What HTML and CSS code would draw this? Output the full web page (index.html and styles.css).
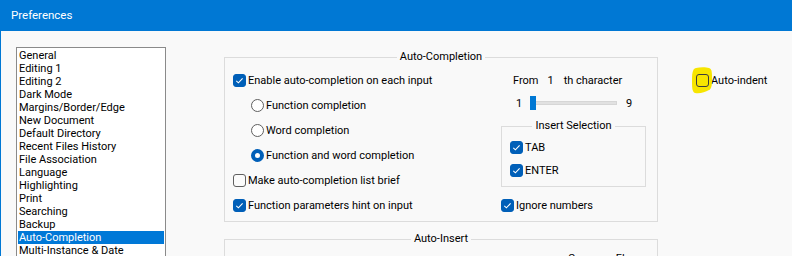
FILE: index.html
```html
<!DOCTYPE html>
<html lang="en">
<head>
    <meta charset="UTF-8">
    <title>Preferences</title>
    <link rel="stylesheet" href="styles.css">
</head>
<body>
    <div class="window">
        <div class="titlebar">Preferences</div>
        <div class="client">
            <ul class="pagelist">
                <li>General</li>
                <li>Editing 1</li>
                <li>Editing 2</li>
                <li>Dark Mode</li>
                <li>Margins/Border/Edge</li>
                <li>New Document</li>
                <li>Default Directory</li>
                <li>Recent Files History</li>
                <li>File Association</li>
                <li>Language</li>
                <li>Highlighting</li>
                <li>Print</li>
                <li>Searching</li>
                <li>Backup</li>
                <li class="selected">Auto-Completion</li>
                <li>Multi-Instance &amp; Date</li>
            </ul>

            <div class="pages">
                <div class="page-col">
                    <fieldset class="group group-main">
                        <legend>Auto-Completion</legend>
                        <div class="group-body">
                            <div class="col-left">
                                <label class="opt"><span class="check on"><svg viewBox="0 0 13 13"><path d="M3.3 6.8 5.4 8.8 9.6 4.4"/></svg></span>Enable auto-completion on each input</label>
                                <label class="opt sub"><span class="radio"></span>Function completion</label>
                                <label class="opt sub"><span class="radio"></span>Word completion</label>
                                <label class="opt sub"><span class="radio on"></span>Function and word completion</label>
                                <label class="opt"><span class="check"></span>Make auto-completion list brief</label>
                                <label class="opt"><span class="check on"><svg viewBox="0 0 13 13"><path d="M3.3 6.8 5.4 8.8 9.6 4.4"/></svg></span>Function parameters hint on input</label>
                            </div>
                            <div class="col-right">
                                <div class="from-row">
                                    <span>From</span>
                                    <span class="from-num">1</span>
                                    <span>th character</span>
                                </div>
                                <div class="slider-row">
                                    <span class="slider-min">1</span>
                                    <span class="track"><span class="thumb"></span></span>
                                    <span class="slider-max">9</span>
                                </div>
                                <fieldset class="group group-sel">
                                    <legend>Insert Selection</legend>
                                    <label class="opt tight"><span class="check on"><svg viewBox="0 0 13 13"><path d="M3.3 6.8 5.4 8.8 9.6 4.4"/></svg></span>TAB</label>
                                    <label class="opt tight"><span class="check on"><svg viewBox="0 0 13 13"><path d="M3.3 6.8 5.4 8.8 9.6 4.4"/></svg></span>ENTER</label>
                                </fieldset>
                                <label class="opt ignore"><span class="check on"><svg viewBox="0 0 13 13"><path d="M3.3 6.8 5.4 8.8 9.6 4.4"/></svg></span>Ignore numbers</label>
                            </div>
                        </div>
                    </fieldset>

                    <fieldset class="group group-insert">
                        <legend>Auto-Insert</legend>
                        <div class="insert-label">Common Flags</div>
                    </fieldset>
                </div>

                <div class="side-col">
                    <label class="opt marked">
                        <svg class="marker" viewBox="0 0 22 27"><path d="M5 1 C9 0 15 0 18 1 C21 2 21 6 21 11 C21 17 21 21 18 23 C14 25 9 27 4 26 C1 25 1 20 1 14 C1 8 1 2 5 1 Z"/></svg>
                        <span class="check"></span>Auto-indent
                    </label>
                </div>
            </div>
        </div>
    </div>
</body>
</html>
```

FILE: styles.css
```css
* {
    margin: 0;
    padding: 0;
    box-sizing: border-box;
}

body {
    background: #f9f9f9;
    font-family: Roboto, "Noto Sans", sans-serif;
    font-size: 11px;
    color: #000;
    height: 256px;
    overflow: hidden;
}

.window {
    border-left: 1px solid #0078d4;
    min-height: 256px;
}

.titlebar {
    height: 31px;
    line-height: 31px;
    padding-left: 10px;
    background: #0078d4;
    color: #fff;
    font-size: 11.5px;
}

.client {
    display: flex;
    padding: 16px 0 0 15px;
}

/* page list on the left */
.pagelist {
    list-style: none;
    flex-shrink: 0;
    width: 150px;
    height: 240px;
    padding: 1px 1px 0;
    border: 1px solid #8a8a8a;
    background: #fff;
    overflow: hidden;
}

.pagelist li {
    height: 13px;
    line-height: 13px;
    padding-left: 1px;
    white-space: nowrap;
}

.pagelist li.selected {
    background: #0078d7;
    color: #fff;
}

.pages {
    display: flex;
    align-items: flex-start;
    margin-left: 58px;
    padding-top: 3px;
}

.page-col {
    width: 434px;
}

/* group boxes */
.group {
    border: 1px solid #dcdcdc;
    min-width: 0;
}

.group legend {
    margin: 0 auto;
    padding: 0 3px;
    line-height: 14px;
}

.group-main {
    padding: 4px 8px 3px;
}

.group-body {
    display: grid;
    grid-template-columns: 268px 1fr;
}

/* checkboxes and radios */
.opt {
    display: flex;
    align-items: center;
    height: 25px;
    white-space: nowrap;
}

.opt.sub {
    padding-left: 18px;
}

.opt.tight {
    height: 23px;
}

.check {
    display: flex;
    flex-shrink: 0;
    width: 13px;
    height: 13px;
    margin-right: 2px;
    border: 1px solid #5f5f5f;
    border-radius: 3px;
    background: rgba(255, 255, 255, 0.3);
}

.check.on {
    border-color: #005fb8;
    background: #005fb8;
}

.check svg {
    width: 13px;
    height: 13px;
    margin: -1px;
    fill: none;
    stroke: #fff;
    stroke-width: 1.1;
}

.radio {
    flex-shrink: 0;
    width: 13px;
    height: 13px;
    margin-right: 2px;
    border: 1px solid #5f5f5f;
    border-radius: 50%;
    background: #fff;
}

.radio.on {
    border: 4px solid #005fb8;
}

/* right column */
.from-row {
    display: flex;
    align-items: center;
    height: 25px;
    padding-left: 12px;
}

.from-num {
    margin: 0 10px 0 9px;
}

.slider-row {
    display: flex;
    align-items: center;
    height: 20px;
    padding-left: 15px;
}

.slider-min {
    width: 14px;
}

.track {
    display: flex;
    align-items: center;
    width: 87px;
    height: 4px;
    background: #e1e1e1;
    border: 1px solid #d6d6d6;
}

.thumb {
    flex-shrink: 0;
    width: 6px;
    height: 14px;
    margin-left: -1px;
    background: #0078d4;
}

.slider-max {
    margin-left: 9px;
}

.group-sel {
    width: 145px;
    margin-top: 6px;
    padding: 3px 8px 4px;
}

.opt.ignore {
    margin-top: 6px;
}

.group-insert {
    margin-top: 10px;
    height: 40px;
}

.insert-label {
    padding: 6px 0 0 343px;
}

/* right side options */
.side-col {
    margin-left: 38px;
    padding-top: 18px;
}

.marked {
    position: relative;
}

.marked .check {
    position: relative;
    border-color: #3c3c3c;
    background: transparent;
}

.marker {
    position: absolute;
    left: -5px;
    top: -1px;
    width: 22px;
    height: 27px;
    fill: #f7e500;
}
```
